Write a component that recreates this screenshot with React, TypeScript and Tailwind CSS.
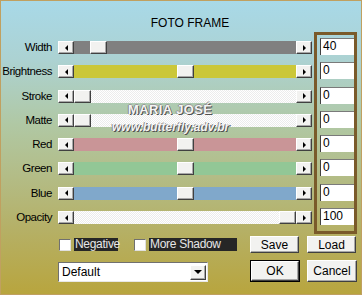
import React from 'react';

const rows = [
  { label: 'Width', value: '40', track: 'bg-[#808080]', thumb: 'ml-[16px]' },
  { label: 'Brightness', value: '0', track: 'bg-[#cbc738]', thumb: 'ml-[103px]' },
  { label: 'Stroke', value: '0', track: 'bg-[repeating-conic-gradient(#ffffff_0_25%,#ececec_0_50%)] bg-[length:2px_2px]', thumb: 'ml-0' },
  { label: 'Matte', value: '0', track: 'bg-[repeating-conic-gradient(#ffffff_0_25%,#ececec_0_50%)] bg-[length:2px_2px]', thumb: 'ml-0' },
  { label: 'Red', value: '0', track: 'bg-[#c99597]', thumb: 'ml-[103px]' },
  { label: 'Green', value: '0', track: 'bg-[#92c796]', thumb: 'ml-[103px]' },
  { label: 'Blue', value: '0', track: 'bg-[#80a8cb]', thumb: 'ml-[103px]' },
  { label: 'Opacity', value: '100', track: 'bg-[repeating-conic-gradient(#ffffff_0_25%,#ececec_0_50%)] bg-[length:2px_2px]', thumb: 'ml-[205px]' },
];

const raised =
  'bg-[#f2f2f0] border border-t-white border-l-white border-r-[#404040] border-b-[#404040] shadow-[inset_-1px_-1px_0_#a8a8a8]';

const ArrowBtn = ({ dir }: { dir: 'left' | 'right' }) => (
  <div className={`w-[16px] h-[13px] shrink-0 flex items-center justify-center ${raised}`}>
    {dir === 'left' ? (
      <span className="w-0 h-0 border-y-[3px] border-y-transparent border-r-[3px] border-r-black" />
    ) : (
      <span className="w-0 h-0 border-y-[3px] border-y-transparent border-l-[3px] border-l-black" />
    )}
  </div>
);

const Button = ({ label, primary, className }: { label: string; primary?: boolean; className: string }) => (
  <div className={`${className} ${primary ? 'outline outline-1 outline-black -outline-offset-1 p-px' : ''}`}>
    <div className={`w-full h-full flex items-center justify-center text-[12px] text-black ${raised}`}>
      {label}
    </div>
  </div>
);

export default function App() {
  return (
    <div
      className="relative w-[362px] h-[295px] border border-[#c0a060] bg-[linear-gradient(180deg,#a8d9e8_0%,#acd2d2_20%,#b0c8a4_42%,#b3bc86_60%,#b5b066_78%,#b8a53e_100%)] text-black overflow-hidden"
      style={{ fontFamily: '"Liberation Sans", Arial, sans-serif' }}
    >
      <div className="mt-[15px] h-[14px] leading-[14px] text-center pl-[18px] text-[12px]">
        FOTO FRAME
      </div>

      <div className="flex mt-[2px]">
        <div className="w-[311px] pt-[9px] flex flex-col gap-[11.3px]">
          {rows.map((r) => (
            <div key={r.label} className="flex items-center h-[13px]">
              <div className="w-[51px] mr-[6px] text-right text-[11.5px] leading-[13px] tracking-[-0.45px] whitespace-nowrap">
                {r.label}
              </div>
              <div className="w-[254px] h-[13px] flex">
                <ArrowBtn dir="left" />
                <div className={`flex-1 h-[13px] flex ${r.track}`}>
                  <div className={`w-[17px] h-[13px] ${r.thumb} ${raised}`} />
                </div>
                <ArrowBtn dir="right" />
              </div>
            </div>
          ))}
        </div>

        <div className="ml-[2px] w-[43px] h-[202px] border-[3px] border-[#7a5a2a] pl-[3px] pt-[3px] flex flex-col gap-[7.3px]">
          {rows.map((r) => (
            <div
              key={r.label}
              className="w-[34px] h-[17px] bg-white border-t border-l border-t-[#7a7a7a] border-l-[#404040] pl-[2px] text-[12px] leading-[15px]"
            >
              {r.value}
            </div>
          ))}
        </div>
      </div>

      <div className="flex items-center h-[17px] mt-[2px] pl-[58px]">
        <div className="w-[12px] h-[12px] bg-white border border-t-[#707070] border-l-[#707070] border-r-[#e0e0e0] border-b-[#e0e0e0]" />
        <div className="ml-[3px] w-[44px] h-[13px] bg-[#262626] text-[#e6e6e6] text-[12px] leading-[13px] pl-px tracking-[-0.3px]">
          Negative
        </div>
        <div className="ml-[16px] w-[12px] h-[12px] bg-white border border-t-[#707070] border-l-[#707070] border-r-[#e0e0e0] border-b-[#e0e0e0]" />
        <div className="ml-[3px] w-[88px] h-[13px] bg-[#262626] text-[#e6e6e6] text-[12px] leading-[13px] pl-px tracking-[-0.3px] whitespace-nowrap">
          More Shadow
        </div>
        <Button label="Save" className="ml-[13px] w-[49px] h-[17px]" />
        <Button label="Load" className="ml-[8px] w-[49px] h-[17px]" />
      </div>

      <div className="flex items-center h-[22px] mt-[7px] pl-[57px]">
        <div className="w-[150px] h-[20px] mt-[2px] bg-white border border-t-[#707070] border-l-[#707070] border-r-[#e8e8e8] border-b-[#e8e8e8] flex items-center">
          <span className="flex-1 pl-[3px] text-[12px] leading-[14px]">Default</span>
          <div className={`w-[16px] h-[15px] mr-[1px] flex items-center justify-center ${raised}`}>
            <span className="w-0 h-0 border-x-[4px] border-x-transparent border-t-[4px] border-t-black" />
          </div>
        </div>
        <Button label="OK" primary className="ml-[42px] w-[50px] h-[22px]" />
        <Button label="Cancel" className="ml-[7px] w-[50px] h-[22px]" />
      </div>

      <div className="absolute left-[127px] top-[102px] text-[13px] leading-[14px] font-bold tracking-[0.4px] text-[#f4f4f4] [text-shadow:1px_1px_0_#505050,-1px_0_0_#8a8a8a,0_-1px_0_#9a9a9a] whitespace-nowrap">
        MARIA JOSÉ
      </div>
      <div className="absolute left-[111px] top-[119px] text-[12px] leading-[14px] font-bold italic text-[#f4f4f4] [text-shadow:1px_1px_0_#505050,-1px_0_0_#8a8a8a] whitespace-nowrap">
        www.butterfly.adv.br
      </div>
    </div>
  );
}
